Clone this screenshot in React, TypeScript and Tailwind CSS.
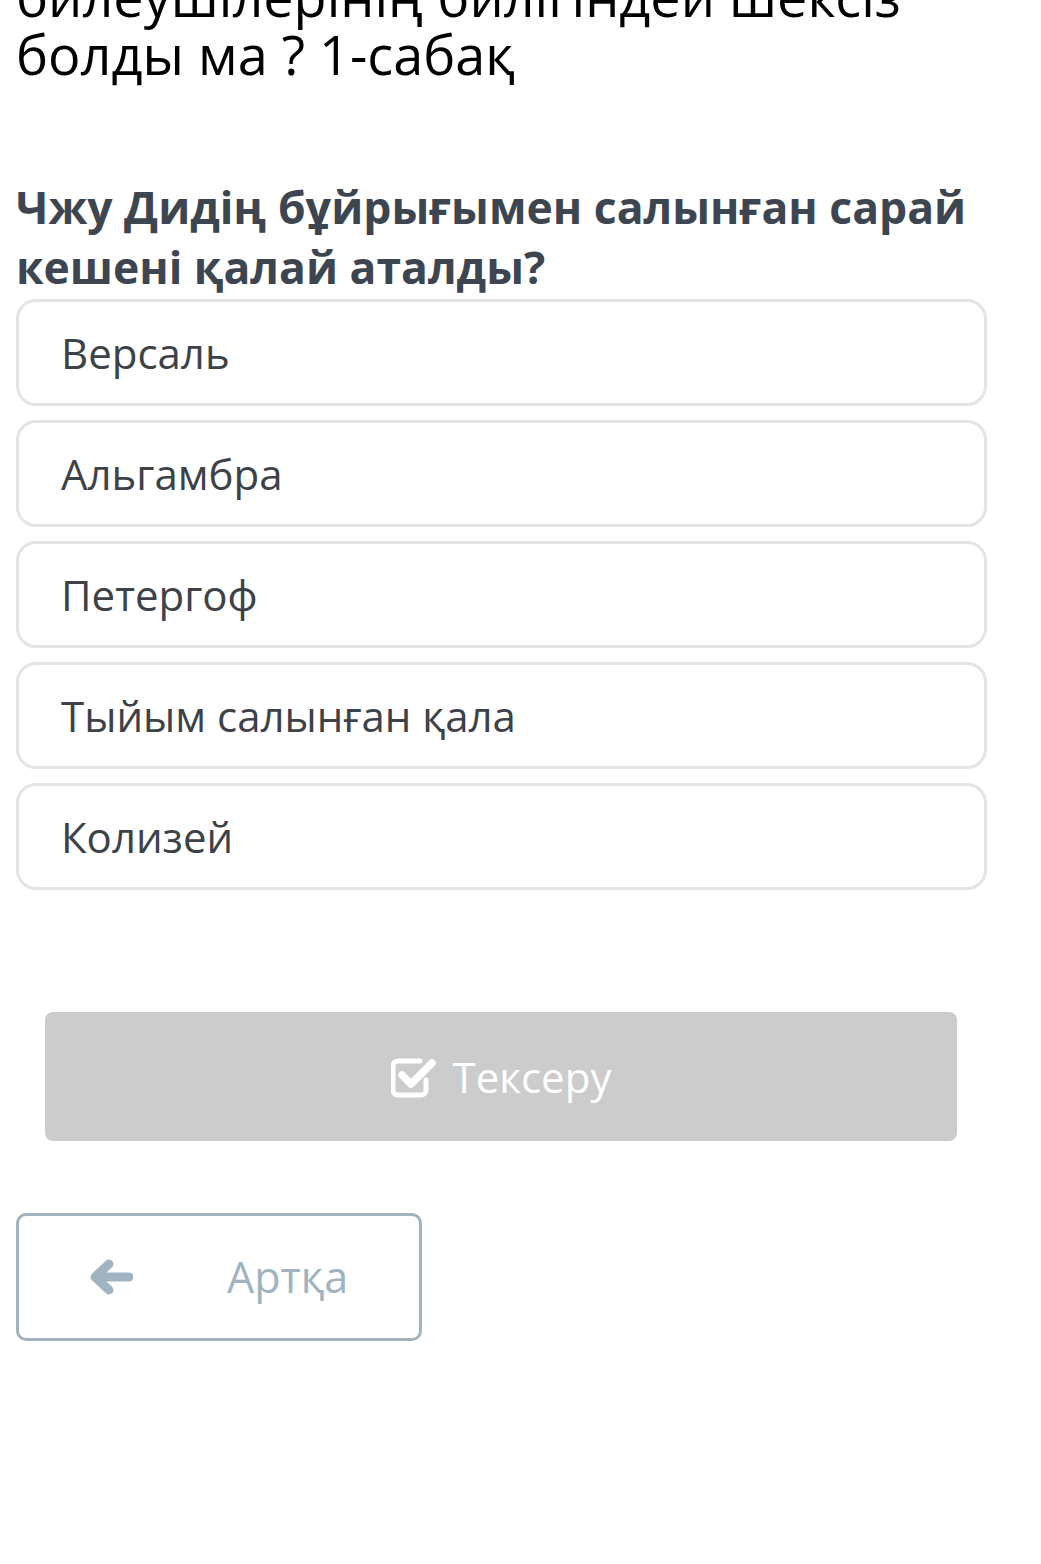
import React from 'react';

const options = ['Версаль', 'Альгамбра', 'Петергоф', 'Тыйым салынған қала', 'Колизей'];

const CheckSquare = () => (
  <svg width="46" height="42" viewBox="0 0 46 42" fill="none">
    <path
      d="M35 24v10a5 5 0 0 1-5 5H7a5 5 0 0 1-5-5V10a5 5 0 0 1 5-5h22"
      stroke="white"
      strokeWidth="5"
      strokeLinecap="round"
      strokeLinejoin="round"
    />
    <path
      d="M11 19l9 9 21-21"
      stroke="white"
      strokeWidth="7.5"
      strokeLinecap="round"
      strokeLinejoin="round"
    />
  </svg>
);

const ArrowLeft = () => (
  <svg width="44" height="36" viewBox="0 0 44 36" fill="none">
    <path
      d="M40 18H8M20 5L6 18l14 13"
      stroke="#9fb3c0"
      strokeWidth="9"
      strokeLinecap="round"
      strokeLinejoin="round"
    />
  </svg>
);

const App = () => {
  return (
    <div className="w-[1041px] h-[1564px] overflow-hidden bg-white font-['Open_Sans',sans-serif]">
      <div className="px-4">
        {/* Lesson title, scrolled off the top */}
        <h1 className="mt-[-33px] text-[54px] leading-[58px] text-black font-normal">
          билеушілерінің билігіндей шексіз
          <br />
          болды ма ? 1-сабақ
        </h1>

        {/* Question */}
        <h2 className="mt-[94px] text-[44.5px] leading-[60px] font-bold text-[#3d4650]">
          Чжу Дидің бұйрығымен салынған сарай кешені қалай аталды?
        </h2>

        {/* Answers */}
        <div className="mt-[2px] flex flex-col gap-[14px] w-[971px]">
          {options.map((option, index) => (
            <div
              key={index}
              className="h-[107px] flex items-center pl-[42px] border-[3px] border-[#e1e5e6] rounded-[20px] text-[42px] text-[#3d4248]"
            >
              {option}
            </div>
          ))}
        </div>

        {/* Check button */}
        <div className="mt-[122px] ml-[29px] w-[912px] h-[129px] rounded-[8px] bg-[#cccccc] flex items-center justify-center gap-[16px]">
          <CheckSquare />
          <span className="text-[42px] text-white">Тексеру</span>
        </div>

        {/* Back button */}
        <div className="mt-[72px] w-[406px] h-[128px] border-[3px] border-[#a3b3bd] rounded-[10px] flex items-center pl-[70px]">
          <ArrowLeft />
          <span className="ml-[94px] text-[43px] text-[#9fb3c0]">Артқа</span>
        </div>
      </div>
    </div>
  );
};

export default App;
